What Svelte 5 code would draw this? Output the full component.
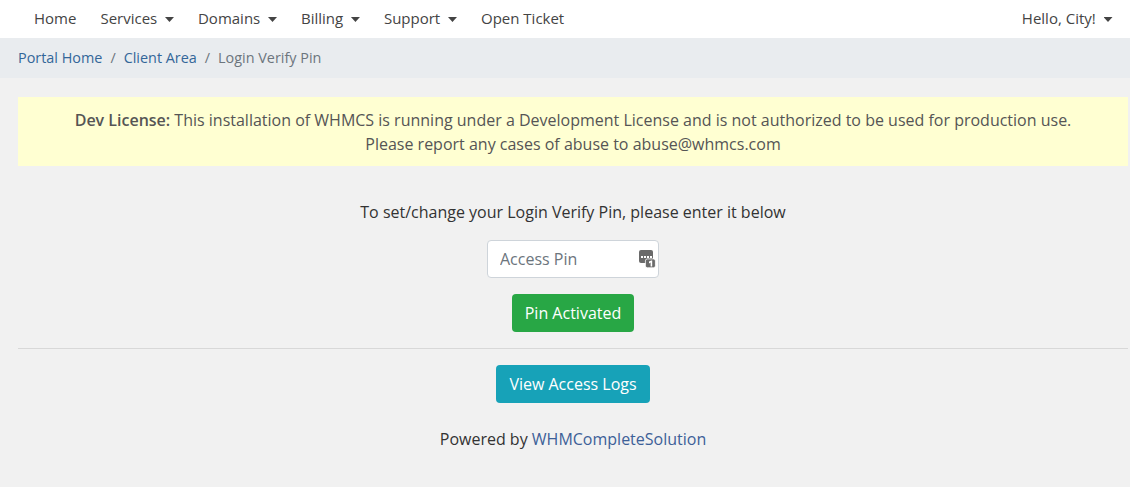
<script>
	const menu = [
		{ label: 'Home' },
		{ label: 'Services', caret: true },
		{ label: 'Domains', caret: true },
		{ label: 'Billing', caret: true },
		{ label: 'Support', caret: true },
		{ label: 'Open Ticket' }
	];
</script>

<nav class="topbar">
	<ul class="menu">
		{#each menu as item}
			<li class:caret={item.caret}>{item.label}</li>
		{/each}
	</ul>
	<div class="menu-right caret">Hello, City!</div>
</nav>

<div class="crumbs">
	<a href="#home">Portal Home</a>
	<span class="sep">/</span>
	<a href="#client">Client Area</a>
	<span class="sep">/</span>
	<span class="current">Login Verify Pin</span>
</div>

<main class="content">
	<div class="license">
		<strong>Dev License:</strong> This installation of WHMCS is running under a Development License and is not authorized to be used for production use.<br />
		Please report any cases of abuse to abuse@whmcs.com
	</div>

	<p class="intro">To set/change your Login Verify Pin, please enter it below</p>

	<div class="pin-field">
		<input type="text" placeholder="Access Pin" />
		<svg class="pin-icon" width="17" height="18" viewBox="0 0 17 18">
			<rect x="0" y="0" width="14" height="13" rx="2" fill="#6a6a6a" />
			<rect x="2" y="6" width="2" height="2" fill="#fff" />
			<rect x="5" y="6" width="2" height="2" fill="#fff" />
			<rect x="8" y="6" width="2" height="2" fill="#fff" />
			<rect x="11" y="6" width="2" height="2" fill="#fff" />
			<rect x="6.4" y="8.9" width="10" height="8.9" rx="2" fill="#6a6a6a" stroke="#fff" stroke-width="0.8" />
			<path d="M10 11.6 L12.2 10.4 H13.2 V16.4 H11.6 V12.6 L10 13.4 Z" fill="#fff" />
		</svg>
	</div>

	<button class="btn success">Pin Activated</button>
	<hr />
	<button class="btn info">View Access Logs</button>

	<p class="powered">Powered by <a href="#whm">WHMCompleteSolution</a></p>
</main>

<style>
	:global(body) {
		background: #f1f1f1;
		font-family: 'Open Sans', sans-serif;
		font-size: 16px;
		color: #333;
	}

	.topbar {
		display: flex;
		justify-content: space-between;
		align-items: center;
		height: 38px;
		padding: 0 17.5px 2px 34px;
		box-sizing: border-box;
		background: #fff;
	}

	.menu {
		display: flex;
		gap: 24px;
		list-style: none;
		margin: 0;
		padding: 0;
	}

	.menu li,
	.menu-right {
		font-size: 15px;
		color: #444;
	}

	.caret::after {
		content: '';
		display: inline-block;
		width: 9px;
		height: 5px;
		margin-left: 7.75px;
		vertical-align: 2px;
		background: #444;
		clip-path: polygon(0 0, 100% 0, 50% 100%);
	}

	.crumbs {
		display: flex;
		align-items: center;
		gap: 8px;
		height: 40px;
		padding: 0 18px 2px;
		box-sizing: border-box;
		background: #e9ecef;
		font-size: 14.4px;
	}

	.crumbs a {
		color: #336699;
		text-decoration: none;
	}

	.crumbs .sep,
	.crumbs .current {
		color: #6c757d;
	}

	.content {
		display: flex;
		flex-direction: column;
		align-items: center;
		padding: 19px 2px 0 18px;
	}

	.license {
		align-self: stretch;
		background: #ffffd2;
		padding: 11px 10px 10px;
		text-align: center;
		line-height: 24px;
		color: #555;
	}

	.license strong {
		font-weight: 600;
	}

	.intro {
		margin: 35px 0 17px;
		line-height: 22px;
		color: #333;
	}

	.pin-field {
		position: relative;
		margin-bottom: 16px;
	}

	.pin-field input {
		box-sizing: border-box;
		display: block;
		width: 172px;
		height: 38px;
		padding: 6px 12px;
		border: 1px solid #ced4da;
		border-radius: 4px;
		background: #fff;
		font: inherit;
	}

	.pin-field input::placeholder {
		color: #6c757d;
	}

	.pin-icon {
		position: absolute;
		right: 3px;
		top: 10px;
	}

	.btn {
		height: 38px;
		padding: 0 13px;
		border: 0;
		border-radius: 4px;
		color: #fff;
		font: inherit;
	}

	.success {
		background: #28a745;
	}

	.info {
		background: #17a2b8;
	}

	hr {
		align-self: stretch;
		margin: 16px 0;
		border: 0;
		border-top: 1px solid #d8d8d8;
	}

	.powered {
		margin: 25px 0 0;
		color: #333;
	}

	.powered a {
		color: #3d6098;
		text-decoration: none;
	}
</style>
